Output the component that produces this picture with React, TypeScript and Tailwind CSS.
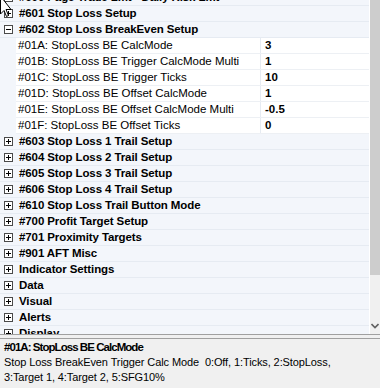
import React from "react";

type Row =
  | { kind: "cat"; label: string; open: boolean }
  | { kind: "prop"; label: string; value: string };

const rows: Row[] = [
  { kind: "cat", label: "#600 Page Trade Lmt - Daily Risk Lmt", open: false },
  { kind: "cat", label: "#601 Stop Loss Setup", open: false },
  { kind: "cat", label: "#602 Stop Loss BreakEven Setup", open: true },
  { kind: "prop", label: "#01A: StopLoss BE CalcMode", value: "3" },
  { kind: "prop", label: "#01B: StopLoss BE Trigger CalcMode Multi", value: "1" },
  { kind: "prop", label: "#01C: StopLoss BE Trigger Ticks", value: "10" },
  { kind: "prop", label: "#01D: StopLoss BE Offset CalcMode", value: "1" },
  { kind: "prop", label: "#01E: StopLoss BE Offset CalcMode Multi", value: "-0.5" },
  { kind: "prop", label: "#01F: StopLoss BE Offset Ticks", value: "0" },
  { kind: "cat", label: "#603 Stop Loss 1 Trail Setup", open: false },
  { kind: "cat", label: "#604 Stop Loss 2 Trail Setup", open: false },
  { kind: "cat", label: "#605 Stop Loss 3 Trail Setup", open: false },
  { kind: "cat", label: "#606 Stop Loss 4 Trail Setup", open: false },
  { kind: "cat", label: "#610 Stop Loss Trail Button Mode", open: false },
  { kind: "cat", label: "#700 Profit Target Setup", open: false },
  { kind: "cat", label: "#701 Proximity Targets", open: false },
  { kind: "cat", label: "#901 AFT Misc", open: false },
  { kind: "cat", label: "Indicator Settings", open: false },
  { kind: "cat", label: "Data", open: false },
  { kind: "cat", label: "Visual", open: false },
  { kind: "cat", label: "Alerts", open: false },
  { kind: "cat", label: "Display", open: false },
];

function Box({ open }: { open: boolean }) {
  return (
    <svg width="9" height="9" viewBox="0 0 9 9" className="block">
      <rect x="0.5" y="0.5" width="8" height="8" fill="#ffffff" stroke="#4a4a4a" />
      <line x1="2" y1="4.5" x2="7" y2="4.5" stroke="#000" />
      {!open && <line x1="4.5" y1="2" x2="4.5" y2="7" stroke="#000" />}
    </svg>
  );
}

export default function App() {
  return (
    <div
      className="relative w-[380px] h-[388px] overflow-hidden bg-[#f0f0f0] text-[11.5px] text-black"
      style={{ fontFamily: '"Liberation Sans", Arial, sans-serif' }}
    >
      <div className="flex h-[334px]">
        <div className="w-[370px] h-full overflow-hidden bg-white">
          <div className="mt-[-10px] w-[369px]">
            {rows.map((r, i) =>
              r.kind === "cat" ? (
                <div
                  key={i}
                  className="flex items-center h-[16px] bg-[#f3f6fb] border-b border-[#e6ebf2]"
                >
                  <div className="w-[16px] flex justify-center pl-[1px]">
                    <Box open={r.open} />
                  </div>
                  <div className="pl-[3px] font-bold whitespace-nowrap leading-[15px] tracking-[-0.1px]">
                    {r.label}
                  </div>
                </div>
              ) : (
                <div key={i} className="flex h-[16px] bg-[#f3f6fb]">
                  <div className="w-[16px] shrink-0" />
                  <div className="flex-1 flex bg-white border-b border-[#edf0f4]">
                    <div className="w-[245px] pl-[2px] whitespace-nowrap overflow-hidden leading-[15px] border-r border-[#e6ebf2]">
                      {r.label}
                    </div>
                    <div className="flex-1 pl-[4px] font-bold leading-[15px]">{r.value}</div>
                  </div>
                </div>
              )
            )}
          </div>
        </div>
        <div className="w-[10px] h-full flex flex-col bg-[#f0f0f0]">
          <div className="h-[275px] bg-[#cdcdcd]" />
          <div className="flex-1" />
          <div className="h-[17px] flex items-center justify-center pr-[1px]">
            <svg width="8" height="6" viewBox="0 0 8 6">
              <path d="M0.5 1 L4 4.5 L7.5 1" fill="none" stroke="#606060" strokeWidth="1.6" />
            </svg>
          </div>
        </div>
      </div>
      <div className="h-[1px] bg-[#a0a0a0]" />
      <div className="h-[3px]" />
      <div className="h-[1px] bg-[#a0a0a0]" />
      <div className="pl-[4px] pt-[1px] leading-[15px] text-[11px]">
        <div className="font-bold text-[11.5px] tracking-[-0.95px]">#01A: StopLoss BE CalcMode</div>
        <div className="whitespace-pre tracking-[-0.1px]">
          {"Stop Loss BreakEven Trigger Calc Mode  0:Off, 1:Ticks, 2:StopLoss,"}
        </div>
        <div className="tracking-[-0.1px]">3:Target 1, 4:Target 2, 5:SFG10%</div>
      </div>
      <svg
        className="absolute left-0 top-0"
        width="14"
        height="22"
        viewBox="0 0 14 22"
      >
        <path
          d="M0.5 -4 L0.5 14 L4 10.5 L6.5 16.5 L8.5 15.5 L6 9.5 L11 9.5 Z"
          fill="#ffffff"
          stroke="#000"
          strokeWidth="1"
        />
      </svg>
    </div>
  );
}
